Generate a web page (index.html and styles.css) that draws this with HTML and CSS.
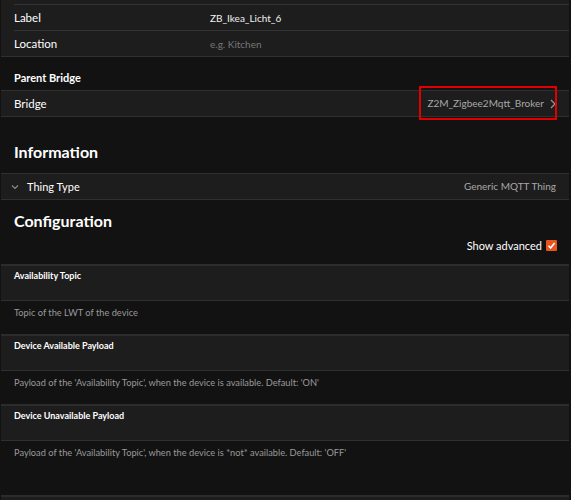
FILE: index.html
```html
<!DOCTYPE html>
<html lang="en">

<head>
    <meta charset="UTF-8">
    <meta name="viewport" content="width=device-width, initial-scale=1.0">
    <title>Thing - ZB_Ikea_Licht_6</title>
    <link rel="stylesheet" href="styles.css">
</head>

<body>
    <!-- Label / Location -->
    <div class="list list-top">
        <div class="item">
            <div class="item-inner">
                <span class="item-title">Label</span>
                <span class="item-input">ZB_Ikea_Licht_6</span>
            </div>
        </div>
        <div class="item">
            <div class="item-inner">
                <span class="item-title">Location</span>
                <span class="item-input placeholder">e.g. Kitchen</span>
            </div>
        </div>
    </div>

    <!-- Parent Bridge -->
    <div class="block-title">Parent Bridge</div>
    <div class="list">
        <div class="item">
            <div class="item-inner">
                <span class="item-title">Bridge</span>
                <span class="item-after highlight">
                    Z2M_Zigbee2Mqtt_Broker
                    <svg class="chevron-right" width="6" height="10" viewBox="0 0 6 10">
                        <polyline points="1,1 5,5 1,9" fill="none" stroke="#9a9a9a" stroke-width="1.2" />
                    </svg>
                </span>
            </div>
        </div>
    </div>

    <!-- Information -->
    <h2 class="section-title">Information</h2>
    <div class="list">
        <div class="item">
            <div class="item-inner">
                <span class="item-title type-title">
                    <svg class="chevron-down" width="8" height="6" viewBox="0 0 8 6">
                        <polyline points="1,1.5 4,4.5 7,1.5" fill="none" stroke="#8a8a8a" stroke-width="1.2" />
                    </svg>
                    Thing Type
                </span>
                <span class="item-after">Generic MQTT Thing</span>
            </div>
        </div>
    </div>

    <!-- Configuration -->
    <h2 class="section-title config-title">Configuration</h2>
    <div class="advanced">
        <label>Show advanced</label>
        <span class="checkbox">
            <svg width="11" height="11" viewBox="0 0 11 11">
                <polyline points="2.5,5.8 4.6,8 8.6,3" fill="none" stroke="#fff" stroke-width="1.6" />
            </svg>
        </span>
    </div>

    <div id="params"></div>

    <script>
        // Config parameters of the thing
        const params = [
            { label: "Availability Topic", description: "Topic of the LWT of the device" },
            { label: "Device Available Payload", description: "Payload of the 'Availability Topic', when the device is available. Default: 'ON'" },
            { label: "Device Unavailable Payload", description: "Payload of the 'Availability Topic', when the device is *not* available. Default: 'OFF'" },
            { label: "", description: "" }
        ];

        const paramList = document.getElementById("params");
        params.forEach((param, index) => {
            const item = document.createElement("div");
            item.classList.add("param");
            if (index === params.length - 2) item.classList.add("param-last");
            item.innerHTML = `<div class="param-input"><div class="param-label">${param.label}</div></div>
                <div class="param-info">${param.description}</div>`;
            paramList.appendChild(item);
        });
    </script>
</body>

</html>
```

FILE: styles.css
```css
* {
    box-sizing: border-box;
    margin: 0;
    padding: 0;
}

body {
    font-family: Lato, "Noto Sans", sans-serif;
    font-size: 11.5px;
    background-color: #121212;
    color: #fff;
    overflow: hidden;
}

.list {
    background-color: #1d1d1d;
    border-top: 1px solid #303030;
    border-bottom: 1px solid #303030;
    margin: 0 2px 0 1px;
}

.list-top {
    border-top: none;
    padding-top: 4px;
}

.list-top .item:first-child .item-inner {
    border-top: 1px solid #333;
}

.item {
    padding-left: 13px;
}

.item-inner {
    box-sizing: content-box;
    display: flex;
    align-items: center;
    justify-content: space-between;
    height: 25px;
    padding-right: 13px;
    border-bottom: 1px solid #333;
}

.item:last-child .item-inner {
    border-bottom: none;
}

.item-title {
    display: flex;
    align-items: center;
    width: 196px;
}

.type-title {
    margin-left: -3px;
    font-size: 11px;
}

.chevron-down {
    margin-right: 8px;
}

.item-input {
    flex: 1;
    font-size: 10px;
    color: #f2f2f2;
}

.placeholder {
    color: #777;
}

.item-after {
    display: flex;
    align-items: center;
    font-size: 10px;
    line-height: 15px;
    color: #a8a8a8;
}

.chevron-right {
    margin-left: 6px;
}

.highlight {
    position: relative;
}

.highlight::after {
    content: "";
    position: absolute;
    left: -8px;
    right: -1px;
    top: -10px;
    bottom: -9px;
    border: 2px solid #e00000;
}

.block-title {
    font-size: 11px;
    font-weight: bold;
    padding: 14px 14px 5px;
    height: 33px;
    line-height: 14px;
}

.section-title {
    font-size: 16px;
    font-weight: bold;
    padding: 24px 14px 0;
    height: 56px;
    line-height: 22px;
}

.config-title {
    padding-top: 10px;
    height: 35px;
}

.advanced {
    display: flex;
    justify-content: flex-end;
    align-items: center;
    gap: 4px;
    height: 20px;
    padding: 0 14px;
    margin-bottom: 9px;
    font-size: 11px;
}

.checkbox {
    display: inline-flex;
    width: 11px;
    height: 11px;
    background-color: #e8541e;
    border-radius: 1px;
}

.param-input {
    background-color: #1d1d1d;
    border-top: 2px solid #2c2c2c;
    border-bottom: 1px solid #303030;
    margin: 0 2px 0 1px;
    height: 37px;
    padding: 3px 13px;
}

.param-label {
    font-size: 9px;
    font-weight: bold;
    line-height: 13px;
}

.param-info {
    height: 33px;
    padding: 5px 14px;
    font-size: 9.25px;
    color: #9a9a9a;
    line-height: 14px;
}

.param-last .param-info {
    height: 54px;
}
```
